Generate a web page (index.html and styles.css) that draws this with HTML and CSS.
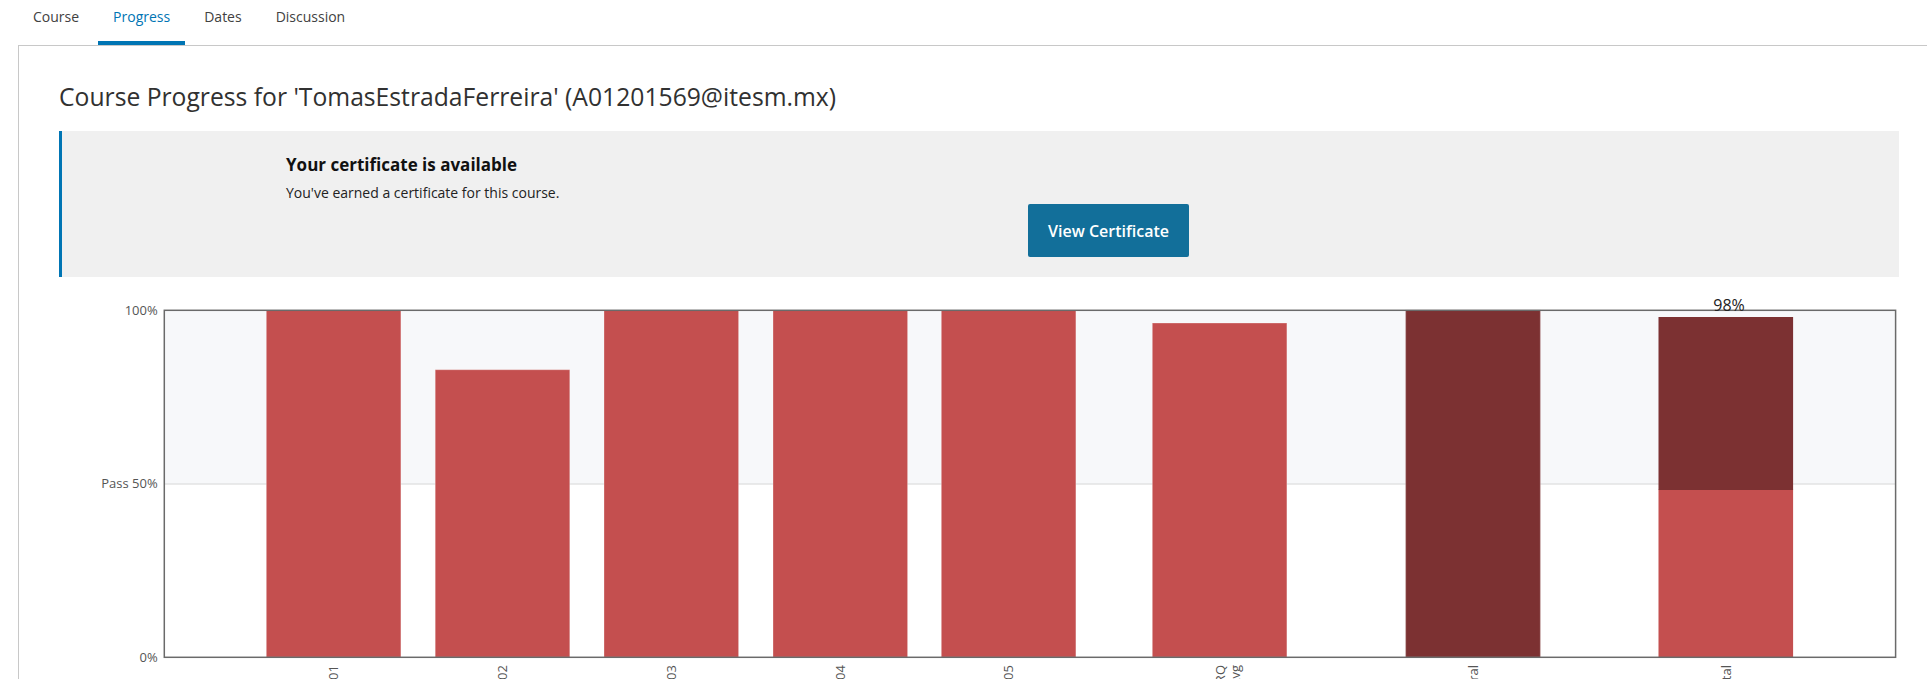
FILE: index.html
```html
<!DOCTYPE html>
<html lang="en">
<head>
<meta charset="utf-8">
<title>Course Progress</title>
<link rel="stylesheet" href="styles.css">
</head>
<body>
<nav class="tabs">
  <a class="tab">Course</a>
  <a class="tab active">Progress</a>
  <a class="tab">Dates</a>
  <a class="tab">Discussion</a>
</nav>
<main class="card">
  <div class="content">
    <h1 class="title">Course Progress for 'TomasEstradaFerreira' (A01201569@itesm.mx)</h1>
    <section class="cert">
      <div class="cert-text">
        <h2 class="cert-title">Your certificate is available</h2>
        <p class="cert-sub">You've earned a certificate for this course.</p>
      </div>
      <div class="cert-actions">
        <a class="btn">View Certificate</a>
      </div>
    </section>
    <svg class="chart" width="1840" height="402" viewBox="0 0 1840 402">
      <rect class="band" x="105.3" y="33.3" width="1731.3" height="173.5"/>
      <line class="passline" x1="105.3" y1="207" x2="1836.6" y2="207"/>
      <text class="ylab" x="98.7" y="37.5">100%</text>
      <text class="ylab" x="98.7" y="211.3">Pass 50%</text>
      <text class="ylab" x="98.7" y="384.5">0%</text>

      <rect class="bar" x="207.3" y="33.3" width="134.6" height="347"/>
      <rect class="bar" x="376.2" y="92.7" width="134.6" height="287.6"/>
      <rect class="bar" x="545" y="33.3" width="134.6" height="347"/>
      <rect class="bar" x="714" y="33.3" width="134.6" height="347"/>
      <rect class="bar" x="882.3" y="33.3" width="134.6" height="347"/>
      <rect class="bar" x="1093.3" y="46" width="134.6" height="334.3"/>
      <rect class="bar dark" x="1346.7" y="33.3" width="134.6" height="347"/>
      <rect class="bar plain" x="1599.5" y="212.5" width="134.6" height="167.8"/>
      <rect class="bar dark plain" x="1599.5" y="40" width="134.6" height="173"/>

      <rect class="frame" x="105.3" y="33.3" width="1731.3" height="347"/>
      <text class="total" x="1670" y="33.7">98%</text>

      <text class="xlab" transform="translate(279,388) rotate(-90)">HW 01</text>
      <text class="xlab" transform="translate(448,388) rotate(-90)">HW 02</text>
      <text class="xlab" transform="translate(617,388) rotate(-90)">HW 03</text>
      <text class="xlab" transform="translate(786,388) rotate(-90)">HW 04</text>
      <text class="xlab" transform="translate(954,388) rotate(-90)">HW 05</text>
      <text class="xlab" transform="translate(1166,388) rotate(-90)">RQ</text>
      <text class="xlab" transform="translate(1181,388) rotate(-90)">Avg</text>
      <text class="xlab" transform="translate(1419,388) rotate(-90)">General</text>
      <text class="xlab" transform="translate(1672,388) rotate(-90)">Total</text>
    </svg>
  </div>
</main>
</body>
</html>
```

FILE: styles.css
```css
html, body {
  margin: 0;
  padding: 0;
  background: #ffffff;
  overflow: hidden;
}
body {
  font-family: "Open Sans", "Noto Sans", sans-serif;
  color: #414141;
}
.tabs {
  display: flex;
  gap: 4px;
  padding-left: 18px;
  height: 45px;
}
.tab {
  display: block;
  box-sizing: border-box;
  height: 45px;
  padding: 7px 15px 0;
  font-size: 14px;
  line-height: 20px;
  color: #414141;
  border-bottom: 4px solid transparent;
}
.tab.active {
  color: #0075b4;
  border-bottom-color: #0075b4;
}
.card {
  margin-left: 18px;
  border-top: 1px solid #c8c8c8;
  border-left: 1px solid #c8c8c8;
  padding-left: 40px;
  width: 1900px;
}
.content {
  width: 1840px;
}
.title {
  margin: 35px 0 18px;
  font-size: 24.7px;
  line-height: 32px;
  font-weight: 400;
  color: #313131;
}
.cert {
  background: #f0f0f0;
  border-left: 3px solid #0075b4;
  padding: 22px 0 20px 224px;
}
.cert-title {
  margin: 0;
  font-size: 17px;
  line-height: 24px;
  font-weight: 700;
  color: #111111;
}
.cert-sub {
  margin: 6px 0 0;
  font-size: 14px;
  line-height: 20px;
  color: #222222;
}
.cert-actions {
  margin-top: 1px;
  padding-left: 742px;
}
.btn {
  display: flex;
  align-items: center;
  justify-content: center;
  width: 161px;
  height: 53px;
  background: #126f9a;
  color: #ffffff;
  border-radius: 2px;
  font-size: 16px;
  font-weight: 600;
}
.chart {
  display: block;
}
.band {
  fill: #f7f8fa;
}
.passline {
  stroke: #d6d6d6;
  stroke-width: 1;
}
.frame {
  fill: none;
  stroke: #6a6a6a;
  stroke-width: 1.5;
}
.bar {
  fill: #c44f4f;
  stroke: rgba(255, 255, 255, 0.3);
  stroke-width: 1;
}
.bar.dark {
  fill: #7c3132;
  stroke: rgba(200, 170, 170, 0.45);
}
.bar.plain {
  stroke: none;
}
.ylab {
  font-family: "Open Sans", "Noto Sans", sans-serif;
  font-size: 13px;
  fill: #555555;
  text-anchor: end;
}
.xlab {
  font-family: "Open Sans", "Noto Sans", sans-serif;
  font-size: 13px;
  fill: #555555;
  text-anchor: end;
}
.total {
  font-family: "Open Sans", "Noto Sans", sans-serif;
  font-size: 16px;
  fill: #222222;
  text-anchor: middle;
}
```
